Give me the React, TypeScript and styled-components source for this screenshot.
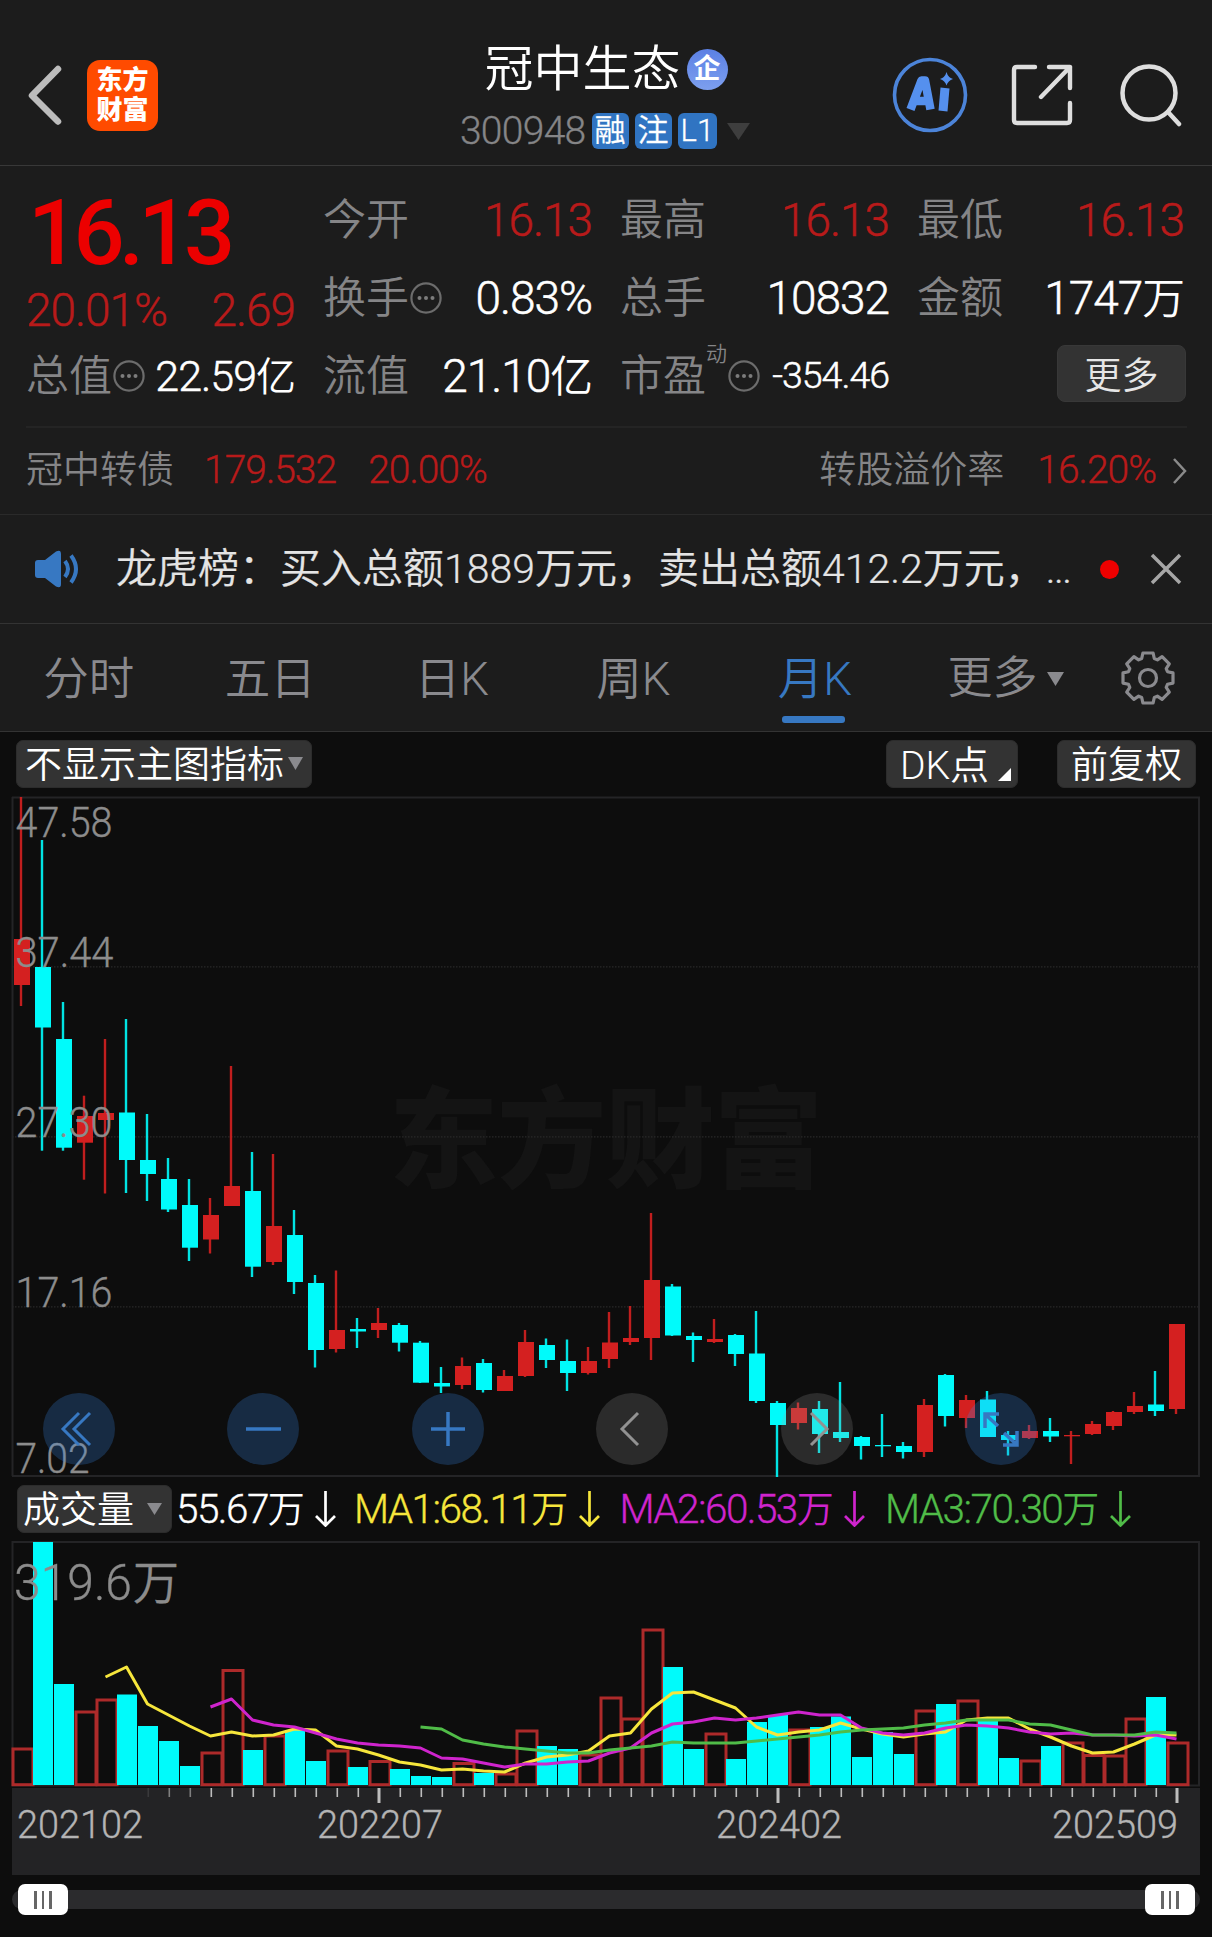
import React from "react";
import styled, { createGlobalStyle } from "styled-components";

const RED = "#b81a1a";
const UP = "#d42020";
const DOWN = "#00fbfb";
const BLUE = "#3778c2";
const MUTED = "#858587";
const FONT = `Roboto, "Noto Sans CJK SC", sans-serif`;

const Global = createGlobalStyle`
  * { box-sizing: border-box; }
  body { margin: 0; background: #0d0d0d; }
  text { font-family: ${FONT}; }
`;

const Page = styled.main`
  width: 1212px;
  height: 1937px;
  display: flex;
  flex-direction: column;
  overflow: hidden;
  background: #0d0d0d;
  color: #fff;
  font-family: ${FONT};
  font-weight: 350;
  line-height: 1;
  white-space: nowrap;
`;

const Header = styled.header`
  height: 166px;
  flex: none;
  display: grid;
  grid-template-columns: 1fr auto 1fr;
  align-items: center;
  padding: 25px 29px 0 27px;
  background: #1c1c1c;
  border-bottom: 1px solid #383838;
`;
const Left = styled.div`
  display: flex;
  align-items: center;
  gap: 25px;
`;
const Logo = styled.div`
  width: 71px;
  height: 71px;
  border-radius: 13px;
  background: #ff4b00;
  display: flex;
  flex-direction: column;
  align-items: center;
  justify-content: center;
  font-size: 26px;
  font-weight: 900;
  line-height: 30px;
`;
const Heading = styled.div`
  display: flex;
  flex-direction: column;
  align-items: center;
  gap: 15px;
  margin: 0 0 1px 2px;
`;
const TitleRow = styled.div`
  display: flex;
  align-items: center;
  gap: 6px;
  height: 58px;
  font-size: 49px;
`;
const Verified = styled.span`
  width: 41px;
  height: 41px;
  border-radius: 50%;
  background: linear-gradient(#5b80e4, #7d9fee);
  display: flex;
  align-items: center;
  justify-content: center;
  font-size: 27px;
  font-weight: 700;
`;
const CodeRow = styled.div`
  display: flex;
  align-items: center;
  gap: 6px;
  height: 36px;
  margin-right: 2px;
  color: ${MUTED};
  font-size: 39px;
  letter-spacing: -0.7px;
  -webkit-text-stroke: 0.3px;
  & > svg { margin-left: 4px; }
`;
const Tag = styled.span`
  height: 36px;
  min-width: 37px;
  padding: 0 3px;
  border-radius: 6px;
  background: #3074c2;
  color: #fff;
  font-size: 31px;
  line-height: 35px;
  letter-spacing: 0;
  display: flex;
  justify-content: center;
`;
const Actions = styled.div`
  display: flex;
  align-items: center;
  justify-content: flex-end;
  gap: 43px;
  & > :last-child { margin-left: 3px; }
`;

const Quote = styled.section`
  flex: none;
  height: 348px;
  background: #1c1c1c;
  padding: 15px 25px 0 26px;
`;
const StatGrid = styled.div`
  display: grid;
  grid-template-columns: 269px 269px 269px 267px;
  grid-template-rows: repeat(3, 78px);
  column-gap: 28px;
  margin-right: 2px;
`;
const PriceBlock = styled.div`
  grid-row: span 2;
  display: flex;
  flex-direction: column;
`;
const Price = styled.div`
  height: 106px;
  margin-left: 2px;
  color: #ec0000;
  font-size: 90px;
  line-height: 106px;
  font-weight: 500;
  letter-spacing: -5.6px;
`;
const Change = styled.div`
  display: flex;
  justify-content: space-between;
  color: ${RED};
  font-size: 46px;
  letter-spacing: -1px;
  line-height: 47px;
  -webkit-text-stroke: 0.45px;
`;
const Stat = styled.div`
  display: flex;
  align-items: center;
  height: 78px;
`;
const StatLabel = styled.span`
  color: ${MUTED};
  font-size: 43px;
`;
const StatValue = styled.span<{ $up?: boolean; $size?: number }>`
  margin-left: auto;
  color: ${(p) => (p.$up ? RED : "#fff")};
  font-size: ${(p) => p.$size ?? 46}px;
  letter-spacing: -1px;
  -webkit-text-stroke: 0.5px;
`;
const Unit = styled.span`
  font-size: 0.93em;
  -webkit-text-stroke: 0;
`;
const Sup = styled.sup`
  align-self: flex-start;
  margin-top: 7px;
  color: ${MUTED};
  font-size: 21px;
`;
const MoreButton = styled.button`
  width: 129px;
  height: 57px;
  margin: -5px -2px 0 auto;
  border: 1px solid #383838;
  border-radius: 8px;
  background: #333;
  color: #e6e6e6;
  font: 350 37px ${FONT};
  padding: 0 0 3px;
`;
const BondRow = styled.div`
  height: 87px;
  margin-top: 11px;
  border-top: 2px solid #242424;
  display: flex;
  align-items: center;
  color: ${MUTED};
  font-size: 37px;
`;
const BondValue = styled.span<{ $gap: number }>`
  margin-left: ${(p) => p.$gap}px;
  color: ${RED};
  font-size: 39px;
  letter-spacing: -1px;
  -webkit-text-stroke: 0.4px;
`;
const Spacer = styled.span`
  flex: 1;
`;

const News = styled.section`
  flex: none;
  height: 110px;
  display: flex;
  align-items: center;
  padding: 0 30px 0 34px;
  background: #1c1c1c;
  border-top: 1px solid #2a2a2a;
  border-bottom: 1px solid #333;
  color: #e4e4e4;
`;
const NewsText = styled.div`
  flex: none;
  width: 962px;
  margin-left: 34px;
  font-size: 41px;
  line-height: 60px;
  -webkit-text-stroke: 0.2px;
`;
const Ellipsis = styled.span`
  letter-spacing: -1.5px;
`;
const Dot = styled.i`
  width: 19px;
  height: 19px;
  margin: 0 31px 0 22px;
  border-radius: 50%;
  background: #ee0000;
`;

const Tabs = styled.nav`
  flex: none;
  height: 108px;
  display: flex;
  background: #1c1c1c;
  border-bottom: 1px solid #333;
`;
const Tab = styled.div<{ $active?: boolean }>`
  width: 181.5px;
  display: flex;
  flex-direction: column;
  align-items: center;
  padding: 26px 4px 0 0;
  color: ${(p) => (p.$active ? BLUE : "#8a8a8e")};
  font-size: 45.5px;
  line-height: 60px;
  &::after {
    content: "";
    width: 63px;
    height: 7px;
    margin: 6px 3px 0 0;
    border-radius: 3px;
    background: ${(p) => (p.$active ? BLUE : "transparent")};
  }
`;
const MoreTab = styled.div`
  width: 196px;
  display: flex;
  align-items: center;
  justify-content: center;
  gap: 9px;
  padding-top: 2px;
  color: #8a8a8e;
  font-size: 45px;
`;
const GearSlot = styled.div`
  display: flex;
  align-items: center;
  margin-left: 16px;
`;

const Toolbar = styled.div`
  flex: none;
  height: 65px;
  display: flex;
  align-items: center;
  padding: 0 16px 2px;
`;
const Pill = styled.button<{ $w: number; $gap?: number; $right?: number }>`
  width: ${(p) => p.$w}px;
  height: 48px;
  display: flex;
  align-items: center;
  justify-content: center;
  gap: ${(p) => p.$gap ?? 4}px;
  padding: 0 ${(p) => p.$right ?? 0}px 4px 0;
  border: 1px solid #2c2c2c;
  border-radius: 7px;
  background: #333;
  color: #fff;
  font: 350 37px ${FONT};
  & > svg { margin-top: 4px; }
`;
const DkLabel = styled.span`
  margin-left: 5px;
  font-size: 39px;
`;
const CornerMark = styled.i`
  align-self: flex-end;
  margin: 0 -2px 2px 5px;
  border-left: 13px solid transparent;
  border-bottom: 13px solid #fff;
`;

const PriceFrame = styled.div`
  position: relative;
  flex: none;
  height: 680px;
`;
const Controls = styled.div`
  position: absolute;
  left: 43px;
  bottom: 12px;
  width: 994px;
  display: flex;
  justify-content: space-between;
`;
const Round = styled.button<{ $gray?: boolean }>`
  width: 72px;
  height: 72px;
  padding: 0;
  border: 0;
  border-radius: 50%;
  background: ${(p) => (p.$gray ? "rgba(165,165,165,.2)" : "rgba(57,137,233,.25)")};
`;

const VolumeBar = styled.div`
  flex: none;
  height: 64px;
  display: flex;
  align-items: center;
  padding: 0 0 0 17px;
`;
const Legend = styled.div<{ $c: string; $w: number }>`
  width: ${(p) => p.$w}px;
  display: flex;
  align-items: center;
  gap: 12px;
  color: ${(p) => p.$c};
  font-size: 40.5px;
  letter-spacing: -1.55px;
  -webkit-text-stroke: 0.35px;
`;
const LegendUnit = styled.span`
  font-size: 37px;
  -webkit-text-stroke: 0;
`;
const Gap = styled.span<{ $w: number }>`
  flex: none;
  width: ${(p) => p.$w}px;
`;

const Axis = styled.div`
  flex: none;
  width: 1188px;
  height: 87px;
  margin: 1px 0 0 12px;
  background: #232325;
`;
const SliderRow = styled.div`
  flex: none;
  height: 31px;
  margin: 9px 12px 0;
  display: flex;
  align-items: center;
`;
const Track = styled.div`
  width: 1188px;
  height: 19px;
  border-radius: 10px;
  background: #2b2b2d;
  display: flex;
  align-items: center;
  justify-content: space-between;
  padding: 0 5px 0 6px;
`;
const Handle = styled.div`
  width: 50px;
  height: 31px;
  border-radius: 7px;
  background: #fff;
  display: flex;
  align-items: center;
  justify-content: center;
  gap: 5px;
`;
const Grip = styled.i`
  width: 2.4px;
  height: 18px;
  background: #666;
`;

/* one row per month: high, body top, body bottom, low, rising */
type Candle = [number, number, number, number, 0 | 1];
const candles: Candle[] = [
  [797, 939, 985, 1006, 1], [840, 967, 1027.5, 1150.7, 0], [1002, 1039, 1147.7, 1150.7, 0],
  [1095.7, 1116, 1142.7, 1179.7, 1], [1039, 1113, 1120, 1193.5, 1], [1019, 1112.5, 1160, 1193, 0],
  [1114, 1160, 1174, 1201, 0], [1158, 1179, 1209.5, 1212, 0], [1179, 1205, 1247.7, 1261, 0],
  [1198, 1215, 1239.5, 1253.5, 1], [1066, 1186, 1206, 1206, 1], [1152, 1191, 1266.7, 1277, 0],
  [1154, 1226, 1262, 1265, 1], [1210, 1235, 1282, 1294, 0], [1275, 1283, 1350, 1367.5, 0],
  [1270.5, 1330, 1349, 1352.5, 1], [1318, 1329, 1331.5, 1348, 0], [1308, 1323, 1330, 1338, 1],
  [1323, 1325, 1342.7, 1351.5, 0], [1341, 1342.7, 1382.7, 1383, 0], [1367, 1383, 1386.5, 1393, 0],
  [1357.5, 1366, 1385, 1389, 1], [1359, 1363, 1390, 1392.5, 0], [1370, 1376, 1391, 1391, 1],
  [1330, 1342, 1376, 1377, 1], [1338.5, 1345, 1360, 1368, 0], [1339.5, 1361, 1373, 1391, 0],
  [1347, 1361, 1373, 1374.5, 1], [1312, 1342.5, 1359, 1368, 1], [1306, 1338, 1342, 1345, 1],
  [1213, 1280, 1338, 1360, 1], [1284, 1286.5, 1335.5, 1336, 0], [1332.5, 1336, 1340, 1362, 0],
  [1319, 1339, 1342, 1343, 1], [1334, 1335, 1354, 1366, 0], [1311, 1353.5, 1401, 1403, 0],
  [1401, 1403, 1425, 1477, 0], [1402.5, 1408, 1423, 1429.5, 1], [1401, 1409, 1434, 1453, 0],
  [1382, 1432, 1438, 1442, 0], [1436, 1437, 1446, 1459.5, 0], [1414, 1445, 1446.3, 1457, 0],
  [1442, 1446, 1452, 1458.5, 0], [1399, 1405, 1452, 1457, 1], [1374, 1375, 1416, 1426.5, 0],
  [1395, 1400, 1418, 1428, 1], [1391, 1399.5, 1437, 1437, 0], [1431, 1435, 1440, 1455.5, 0],
  [1425, 1431, 1438, 1439, 1], [1418, 1431, 1436.5, 1442, 0], [1431, 1435, 1436.3, 1464, 1],
  [1421, 1424, 1434, 1435, 1], [1411, 1412, 1426, 1430, 1], [1392, 1406, 1412, 1414, 1],
  [1371, 1404.5, 1411, 1416, 0], [1324, 1324, 1409, 1414, 1],
];
const volumeTops = [
  1749, 1542, 1684, 1712, 1700, 1694.5, 1726, 1741, 1766, 1753, 1670.5, 1750, 1736, 1730, 1761, 1751,
  1767, 1761.5, 1769, 1776, 1777, 1763.5, 1773, 1774, 1731, 1746, 1749, 1755, 1698, 1719, 1630, 1667,
  1749, 1734, 1759, 1722, 1715, 1730, 1727, 1716.5, 1757, 1732, 1754, 1711, 1704, 1701, 1720, 1758,
  1761, 1746, 1743, 1755.5, 1756, 1719, 1697, 1743,
];
const ma1 = [
  1677, 1667, 1704, 1715, 1726, 1736, 1732, 1736, 1735, 1729, 1730, 1746, 1749, 1755, 1762, 1765, 1770,
  1769, 1771, 1772, 1763, 1757, 1755, 1751, 1736, 1733, 1709, 1693, 1692, 1700, 1708, 1727, 1735, 1732,
  1730, 1723, 1729, 1734, 1737, 1734, 1732, 1720, 1718, 1718, 1729, 1737, 1746, 1753, 1752, 1744, 1735, 1735,
];
const ma2 = [
  1707, 1699, 1720, 1725, 1727, 1733, 1739, 1743, 1745, 1746, 1748, 1758, 1759, 1763, 1767, 1764, 1764,
  1762, 1761, 1753, 1748, 1733, 1724, 1722, 1718, 1720, 1718, 1715, 1712, 1715, 1715, 1728, 1733, 1735,
  1733, 1728, 1725, 1726, 1728, 1732, 1734, 1733, 1735, 1735, 1736, 1735, 1739,
];
const ma3 = [
  1727, 1729, 1740, 1744, 1747, 1749, 1751, 1753, 1753, 1750, 1748, 1746, 1742, 1743, 1743, 1743, 1741,
  1739, 1737, 1735, 1732, 1730, 1729, 1728, 1725, 1723, 1720, 1720, 1720, 1724, 1725, 1730, 1735, 1735,
  1735, 1732, 1733,
];
const linePoints = (ys: number[], first: number) =>
  ys.map((y, i) => `${21.5 + 21 * (i + first)},${y}`).join(" ");

const Info = () => (
  <svg width="33" height="32" viewBox="-1 0 33 32" fill="none" stroke="#6c6c6c" strokeWidth="2.2">
    <circle cx="16" cy="16" r="14.6" />
    <g fill="#7c7c7c" stroke="none">
      <circle cx="9.5" cy="16" r="2" /><circle cx="16" cy="16" r="2" /><circle cx="22.5" cy="16" r="2" />
    </g>
  </svg>
);
const Triangle = ({ w, h, c }: { w: number; h: number; c: string }) => (
  <svg width={w} height={h}><path d={`M0 0H${w}L${w / 2} ${h}Z`} fill={c} /></svg>
);
const DownArrow = () => (
  <svg width="21" height="36" fill="none" stroke="currentColor" strokeWidth="2.7">
    <path d="M10.5 0V34M1 25L10.5 34.5L20 25" />
  </svg>
);

const gearPath = (() => {
  const pts: string[] = [];
  for (let i = 0; i < 8; i++) {
    const a = (i * Math.PI) / 4 - Math.PI / 2;
    [[-0.31, 20.5], [-0.2, 25.5], [0.2, 25.5], [0.31, 20.5]].forEach(([d, r]) =>
      pts.push(`${(28 + r * Math.cos(a + d)).toFixed(1)} ${(28 + r * Math.sin(a + d)).toFixed(1)}`));
  }
  return `M${pts.join("L")}Z`;
})();

const priceLabels: [string, number, number][] = [
  ["47.58", 837, 97], ["37.44", 967, 98], ["27.30", 1137, 97], ["17.16", 1307, 97], ["7.02", 1473, 74],
];
const months: [string, number][] = [["202102", 5], ["202207", 305], ["202402", 704], ["202509", 1040]];

const ChartText = styled.text`
  font-weight: 350;
  fill: #8c8c8c;
  stroke: #8c8c8c;
  stroke-width: 0.35px;
`;
const MonthText = styled(ChartText)`
  fill: #b4b4b4;
  stroke: #b4b4b4;
`;

function PriceChart() {
  return (
    <svg width="1212" height="680" viewBox="0 797 1212 680" display="block" overflow="visible">
      <text x="389" y="1179" fontSize="109" fontWeight="900" fill="#141414" textLength="434">东方财富</text>
      {[966.8, 1136.8, 1306.8].map((y) => (
        <line key={y} x1="12" x2="1199" y1={y} y2={y} stroke="#292929" strokeWidth="1.3" strokeDasharray="1.5 1.5" />
      ))}
      <path d="M12.5 797V1476M12 797.5H1199V1476H12" fill="none" stroke="#242426" strokeWidth="2" />
      {candles.map(([hi, top, bottom, lo, up], i) => (
        <g key={i} fill={up ? UP : DOWN}>
          <rect x={19.8 + 21 * i} y={hi} width="2.4" height={lo - hi} opacity=".9" />
          <rect x={14 + 21 * i} y={top} width="16" height={bottom - top} />
        </g>
      ))}
      {priceLabels.map(([t, y, w]) => (
        <ChartText key={t} x="15.5" y={y} fontSize="42" textLength={w} lengthAdjust="spacingAndGlyphs">{t}</ChartText>
      ))}
    </svg>
  );
}

function VolumeChart() {
  return (
    <svg width="1212" height="246" viewBox="0 1541 1212 246" display="block">
      <path d="M12.5 1542H1199V1785.5H12.5Z" fill="none" stroke="#242426" strokeWidth="2" />
      {volumeTops.map((y, i) =>
        candles[i][4] ? (
          <rect key={i} x={13 + 21 * i} y={y} width="20" height={1784.7 - y} fill="none" stroke="#ad2a2a" strokeWidth="3" />
        ) : (
          <rect key={i} x={12 + 21 * i} y={y} width="20" height={1785 - y} fill={DOWN} />
        ))}
      <g fill="none" strokeWidth="3" strokeLinejoin="round">
        <polyline points={linePoints(ma1, 4)} stroke="#f6e63c" />
        <polyline points={linePoints(ma2, 9)} stroke="#cf24cd" />
        <polyline points={linePoints(ma3, 19)} stroke="#50bc48" />
      </g>
      <ChartText x="14" y="1600" fontSize="50" textLength="118" lengthAdjust="spacingAndGlyphs">319.6</ChartText>
      <ChartText x="133" y="1599" fontSize="46">万</ChartText>
    </svg>
  );
}

function TimeAxis() {
  return (
    <Axis>
      <svg width="1188" height="87" display="block">
        {Array.from({ length: 50 }, (_, k) => k + 6).map((i) => {
          const major = i === 17 || i === 36 || i === 55;
          return (
            <rect key={i} x={9.5 + 21 * i - (major ? 1 : 0)} y="0" width={major ? 3 : 1.6} height={major ? 15 : 9}
              fill="#bdbdbd" opacity={i === 6 ? 0.15 : i < 9 ? 0.6 : 1} />
          );
        })}
        {months.map(([m, x]) => (
          <MonthText key={m} x={x} y="50" fontSize="39" textLength="126" lengthAdjust="spacingAndGlyphs">{m}</MonthText>
        ))}
      </svg>
    </Axis>
  );
}

export default function App() {
  return (
    <Page lang="zh-CN">
      <Global />
      <Header>
        <Left>
          <svg width="35" height="62" fill="none" stroke="#bcbcbc" strokeWidth="6.5" strokeLinecap="round" strokeLinejoin="round">
            <path d="M31 5L5 31.5L31 57.5" />
          </svg>
          <Logo><span>东方</span><span>财富</span></Logo>
        </Left>
        <Heading>
          <TitleRow>冠中生态<Verified>企</Verified></TitleRow>
          <CodeRow>
            300948<Tag>融</Tag><Tag>注</Tag><Tag>L1</Tag>
            <Triangle w={23} h={17} c="#3e3e3e" />
          </CodeRow>
        </Heading>
        <Actions>
          <svg width="76" height="76" viewBox="0 0 76 76">
            <circle cx="38" cy="38" r="35.5" fill="none" stroke="#4c84d9" strokeWidth="3.6" />
            <g fill="none" stroke="#5590ee" strokeWidth="8.5" strokeLinejoin="round">
              <path d="M18.5 52.5L29.5 23.5H33L38.5 52.5M23 44H36" />
              <path d="M53 31L51 54" strokeWidth="9" />
            </g>
            <path d="M54.5 15Q56 20.5 61 22Q56 23.5 54.5 28.5Q53 23.5 48 22Q53 20.5 54.5 15Z" fill="#5590ee" />
          </svg>
          <svg width="62" height="62" fill="none" stroke="#dedede" strokeWidth="4.4" strokeLinecap="round" strokeLinejoin="round">
            <path d="M24 3H6Q3 3 3 6V56Q3 59 6 59H56Q59 59 59 56V39M38 3H59V24M59 3L30 33" />
          </svg>
          <svg width="64" height="64" fill="none" stroke="#dedede" strokeWidth="4.5" strokeLinecap="round">
            <circle cx="30" cy="30" r="26.5" /><path d="M49 49L60 61" />
          </svg>
        </Actions>
      </Header>

      <Quote>
        <StatGrid>
          <PriceBlock>
            <Price>16.13</Price>
            <Change><span>20.01%</span><span>2.69</span></Change>
          </PriceBlock>
          <Stat><StatLabel>今开</StatLabel><StatValue $up>16.13</StatValue></Stat>
          <Stat><StatLabel>最高</StatLabel><StatValue $up>16.13</StatValue></Stat>
          <Stat><StatLabel>最低</StatLabel><StatValue $up>16.13</StatValue></Stat>
          <Stat><StatLabel>换手</StatLabel><Info /><StatValue>0.83%</StatValue></Stat>
          <Stat><StatLabel>总手</StatLabel><StatValue>10832</StatValue></Stat>
          <Stat><StatLabel>金额</StatLabel><StatValue>1747<Unit>万</Unit></StatValue></Stat>
          <Stat><StatLabel>总值</StatLabel><Info /><StatValue $size={43}>22.59<Unit>亿</Unit></StatValue></Stat>
          <Stat><StatLabel>流值</StatLabel><StatValue>21.10<Unit>亿</Unit></StatValue></Stat>
          <Stat><StatLabel>市盈</StatLabel><Sup>动</Sup><Info /><StatValue $size={37.5}>-354.46</StatValue></Stat>
          <Stat><MoreButton>更多</MoreButton></Stat>
        </StatGrid>
        <BondRow>
          冠中转债<BondValue $gap={30}>179.532</BondValue><BondValue $gap={32}>20.00%</BondValue>
          <Spacer />
          转股溢价率<BondValue $gap={33}>16.20%</BondValue>
          <Gap $w={16} />
          <svg width="15" height="26" fill="none" stroke="#8a8a8a" strokeWidth="2.5">
            <path d="M2 1L13 13L2 25" />
          </svg>
        </BondRow>
      </Quote>

      <News>
        <svg width="48" height="40" fill="none">
          <path d="M4 11H11L22 2.5Q27 0 27 5V35Q27 40 22 37.5L11 29H4Q1 29 1 26V14Q1 11 4 11Z" fill={BLUE} />
          <path d="M31 12Q37 20 31 28M37 6.5Q47 20 37 33.5" stroke={BLUE} strokeWidth="4" />
        </svg>
        <NewsText>龙虎榜：买入总额1889万元，卖出总额412.2万元，<Ellipsis>...</Ellipsis></NewsText>
        <Dot />
        <svg width="32" height="32" fill="none" stroke="#a6a6a6" strokeWidth="3.5"><path d="M2 2L30 30M30 2L2 30" /></svg>
      </News>

      <Tabs>
        <Tab>分时</Tab>
        <Tab>五日</Tab>
        <Tab>日K</Tab>
        <Tab>周K</Tab>
        <Tab $active>月K</Tab>
        <MoreTab>更多<Triangle w={17} h={14} c="#8a8a8e" /></MoreTab>
        <GearSlot>
          <svg width="56" height="56" fill="none" stroke="#8a8a8e" strokeWidth="3.2" strokeLinejoin="round">
            <path d={gearPath} /><circle cx="28" cy="28" r="8.5" />
          </svg>
        </GearSlot>
      </Tabs>

      <Toolbar>
        <Pill $w={296}>不显示主图指标<Triangle w={15} h={13} c="#8a8a8e" /></Pill>
        <Spacer />
        <Pill $w={132}><DkLabel>DK点</DkLabel><CornerMark /></Pill>
        <Gap $w={39} />
        <Pill $w={139}>前复权</Pill>
      </Toolbar>

      <PriceFrame>
        <PriceChart />
        <Controls>
          <Round><svg width="72" height="72" fill="none" stroke={BLUE} strokeWidth="3"><path d="M36 20L20 36L36 52M47 20L31 36L47 52" /></svg></Round>
          <Round><svg width="72" height="72" stroke={BLUE} strokeWidth="3.5"><path d="M19 36H54" /></svg></Round>
          <Round><svg width="72" height="72" stroke={BLUE} strokeWidth="3.5"><path d="M19 36H53M36 19V53" /></svg></Round>
          <Round $gray><svg width="72" height="72" fill="none" stroke="#929292" strokeWidth="3"><path d="M42 20L26 36L42 52" /></svg></Round>
          <Round $gray><svg width="72" height="72" fill="none" stroke="#929292" strokeWidth="3"><path d="M30 20L46 36L30 52" /></svg></Round>
          <Round><svg width="72" height="72" fill="none" stroke={BLUE} strokeWidth="3.5"><path d="M20 35V21H34M21 22L33 33M52 38V52H38M51 51L39 40" /></svg></Round>
        </Controls>
      </PriceFrame>

      <VolumeBar>
        <Pill $w={155} $gap={13} $right={4}>成交量<Triangle w={15} h={12} c="#8a8a8e" /></Pill>
        <Gap $w={4} />
        <Legend $c="#fff" $w={178}><span>55.67<LegendUnit>万</LegendUnit></span><DownArrow /></Legend>
        <Legend $c="#f6e63c" $w={265.5}><span>MA1:68.11<LegendUnit>万</LegendUnit></span><DownArrow /></Legend>
        <Legend $c="#cf24cd" $w={265.5}><span>MA2:60.53<LegendUnit>万</LegendUnit></span><DownArrow /></Legend>
        <Legend $c="#50bc48" $w={265.5}><span>MA3:70.30<LegendUnit>万</LegendUnit></span><DownArrow /></Legend>
      </VolumeBar>

      <VolumeChart />
      <TimeAxis />
      <SliderRow>
        <Track>
          <Handle><Grip /><Grip /><Grip /></Handle>
          <Handle><Grip /><Grip /><Grip /></Handle>
        </Track>
      </SliderRow>
    </Page>
  );
}
